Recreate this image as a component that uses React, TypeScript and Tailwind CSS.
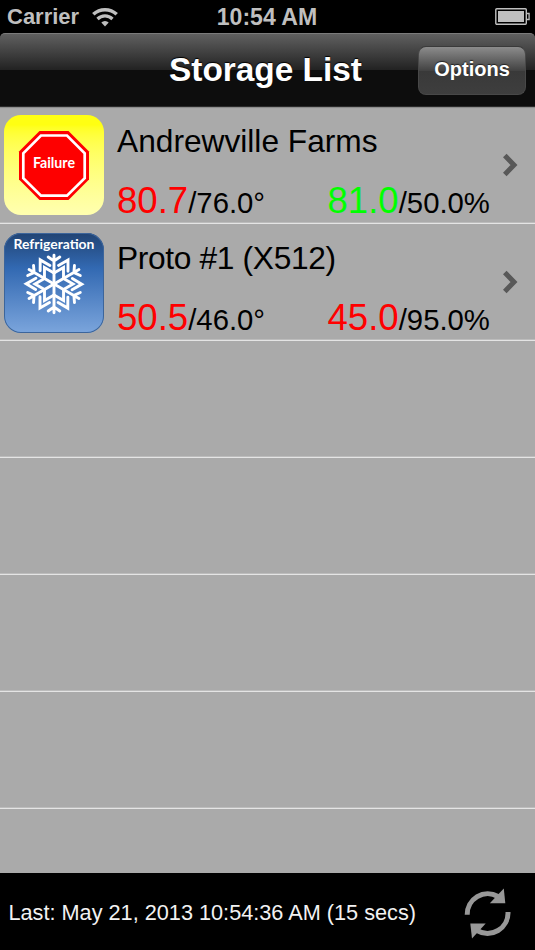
import React from 'react';

interface StorageItem {
  name: string;
  status: 'failure' | 'refrigeration';
  temp: string;
  tempTarget: string;
  tempOk: boolean;
  humidity: string;
  humidityTarget: string;
  humidityOk: boolean;
}

const items: StorageItem[] = [
  {
    name: 'Andrewville Farms',
    status: 'failure',
    temp: '80.7',
    tempTarget: '76.0',
    tempOk: false,
    humidity: '81.0',
    humidityTarget: '50.0',
    humidityOk: true,
  },
  {
    name: 'Proto #1 (X512)',
    status: 'refrigeration',
    temp: '50.5',
    tempTarget: '46.0',
    tempOk: false,
    humidity: '45.0',
    humidityTarget: '95.0',
    humidityOk: false,
  },
];

const WifiIcon = () => (
  <svg width="26" height="20" viewBox="0 0 26 20" fill="none" stroke="#bfbfbf">
    <path d="M1.3 7.3a17 17 0 0 1 23.4 0" strokeWidth="3.5" />
    <path d="M5.5 12a10.6 10.6 0 0 1 15 0" strokeWidth="3.2" />
    <path d="M13 19.6l-3.7-4a5.2 5.2 0 0 1 7.4 0z" fill="#bfbfbf" stroke="none" />
  </svg>
);

const BatteryIcon = () => (
  <svg width="36" height="18" viewBox="0 0 36 18" fill="none" stroke="#bfbfbf">
    <rect x="0.8" y="0.8" width="30.5" height="15.4" rx="1" strokeWidth="1.4" />
    <rect x="3" y="3" width="26" height="11" fill="#bfbfbf" stroke="none" />
    <path d="M31.5 5.5h2.6v6h-2.6" strokeWidth="1.3" />
  </svg>
);

const StopSign = () => (
  <svg className="absolute inset-0" width="100" height="100" viewBox="0 0 100 100">
    <path d="M35.5 16h29L85 36.5v28L64.5 85h-29L15 64.5v-28z" fill="#fe0000" />
    <path d="M37 20.5h26L80.7 38.2v25L63 80.7H37L19.3 63.2v-25z" fill="none" stroke="#fff" strokeWidth="2.7" />
  </svg>
);

const Snowflake = () => (
  <svg className="absolute inset-0" width="100" height="100" viewBox="0 0 100 100">
    <g transform="translate(50 51)" stroke="#fff" strokeWidth="2.9" strokeLinecap="round" fill="none">
      {[0, 60, 120, 180, 240, 300].map((angle) => (
        <g key={angle} transform={`rotate(${angle})`}>
          <path d="M0 0V-28.8M-5.8 -27L0 -23L5.8 -27" />
          <path d="M0 -11L9.5 -16.5L9.5 -5.5" />
          <path d="M4.5 -18.6L14 -24V-12.8" />
        </g>
      ))}
    </g>
  </svg>
);

const StatusTile = ({ status }: { status: StorageItem['status'] }) =>
  status === 'failure' ? (
    <div className="relative size-[100px] rounded-[17px] bg-linear-to-b from-[#ffff12] from-10% to-[#ffffb0]">
      <StopSign />
      <span className="absolute inset-x-0 top-[40px] text-center font-[Lato] text-[14.2px] leading-4 font-bold text-white">
        Failure
      </span>
    </div>
  ) : (
    <div className="relative mt-px size-[100px] rounded-[17px] bg-linear-to-b from-[#214474] via-[#3269b2] via-35% to-[#7ba5dc] shadow-[inset_0_0_0_1px_#3c659b]">
      <Snowflake />
      <span className="absolute inset-x-0 top-[3px] text-center font-[Lato] text-[13.9px] leading-4 font-bold text-white">
        Refrigeration
      </span>
    </div>
  );

const Reading = ({ value, target, ok }: { value: string; target: string; ok: boolean }) => (
  <div className="flex items-baseline leading-none whitespace-nowrap">
    <span className={ok ? 'text-[36.6px] text-[#00ff00]' : 'text-[36.6px] text-[#ff0000]'}>{value}</span>
    <span className="text-[29.3px]">/{target}</span>
  </div>
);

const StorageRow = ({ item }: { item: StorageItem }) => (
  <li className="flex h-[117px] border-b border-[#e4e4e4] pt-[8px] pl-[4px] shadow-[inset_0_-1px_#bcbcbc]">
    <StatusTile status={item.status} />
    <div className="ml-[13px] w-[373px]">
      <h2
        className={`mt-[10px] text-[31.7px] leading-8 whitespace-nowrap ${
          item.name.includes('#') ? 'tracking-[-0.33px]' : ''
        }`}
      >
        {item.name}
      </h2>
      <div className="mt-[26px] flex">
        <div className="w-[210.5px]">
          <Reading value={item.temp} target={`${item.tempTarget}°`} ok={item.tempOk} />
        </div>
        <Reading value={item.humidity} target={`${item.humidityTarget}%`} ok={item.humidityOk} />
      </div>
    </div>
    <svg className="mt-[38px] ml-[13px]" width="16" height="24" viewBox="0 0 16 24">
      <path d="M1.8 2.5L11 12L1.8 21.5" fill="none" stroke="#585858" strokeWidth="5" />
    </svg>
  </li>
);

const RefreshIcon = () => (
  <svg width="56" height="60" viewBox="0 0 56 60" fill="none" stroke="#989898" strokeWidth="5">
    <path d="M7.2 32.8A20.5 20.5 0 0 1 38 14.5" />
    <path d="M48 30A20.5 20.5 0 0 1 17 48.5" />
    <path d="M43.8 6.5L45.3 21.3H29.8z" fill="#989898" stroke="none" />
    <path d="M10.3 41.5H25.7L12 56.5z" fill="#989898" stroke="none" />
  </svg>
);

export default function App() {
  return (
    <div className="flex h-[950px] w-[535px] flex-col overflow-hidden bg-black font-['Liberation_Sans',sans-serif] text-black">
      <div className="grid h-[33px] grid-cols-[1fr_auto_1fr] items-center pr-[4px] pl-[4px] text-[23.1px] leading-none font-bold text-[#bfbfbf]">
        <div className="flex items-center gap-[13px] pl-[3px]">
          <span className="text-[22px]">Carrier</span>
          <WifiIcon />
        </div>
        <span className="pt-[2px] pr-[1px] text-center">10:54 AM</span>
        <div className="flex justify-end">
          <BatteryIcon />
        </div>
      </div>

      <header className="grid h-[74px] grid-cols-[1fr_auto_1fr] items-center rounded-t-[5px] border-t border-b border-t-[#7b7b7b] border-b-[#2a2a2a] bg-[linear-gradient(#606060,#222_50%,#0d0d0d_50%,#0d0d0d)] pr-[9px] pl-[5px]">
        <h1 className="col-start-2 text-[33.4px] leading-none font-bold text-white [text-shadow:0_-1px_1px_#000]">
          Storage List
        </h1>
        <button className="h-[49px] w-[108px] justify-self-end rounded-[8px] border border-[#484848] border-t-[#3a3a3a] bg-[linear-gradient(#8c8c8c,#434343_50%,#393939_50%,#3e3e3e)] pb-[2px] text-[20px] font-bold text-white [text-shadow:0_-1px_1px_#222]">
          Options
        </button>
      </header>

      <ul className="flex-1 overflow-hidden bg-[#aaaaaa] shadow-[inset_0_2px_1px_-1px_#8a8a8a]">
        {items.map((item) => (
          <StorageRow key={item.name} item={item} />
        ))}
        {[0, 1, 2, 3].map((row) => (
          <li key={row} className="h-[117px] border-b border-[#e4e4e4] shadow-[inset_0_-1px_#bcbcbc]" />
        ))}
      </ul>

      <footer className="flex h-[77px] items-center justify-between pr-[19px] pl-[8.5px] text-[21.7px] text-[#f2f2f2]">
        <span className="pt-[4px]">Last: May 21, 2013 10:54:36 AM (15 secs)</span>
        <RefreshIcon />
      </footer>
    </div>
  );
}
